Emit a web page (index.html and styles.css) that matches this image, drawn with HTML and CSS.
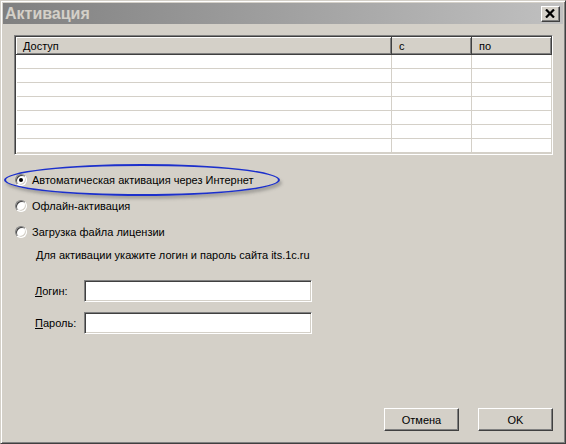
FILE: index.html
```html
<!DOCTYPE html>
<html lang="ru">
<head>
    <meta charset="UTF-8">
    <title>Активация</title>
    <link rel="stylesheet" href="styles.css">
</head>
<body>
    <div class="window">
        <div class="title-bar">
            <span class="title">Активация</span>
            <div class="close-btn">
                <svg width="10" height="9" viewBox="0 0 10 9">
                    <path d="M1 0.5 L9 8.5 M9 0.5 L1 8.5" stroke="#000" stroke-width="2.2"/>
                </svg>
            </div>
        </div>

        <div class="dialog-body">
            <div class="grid">
                <table>
                    <thead>
                        <tr>
                            <th class="col-access">Доступ</th>
                            <th class="col-from">с</th>
                            <th class="col-to">по</th>
                        </tr>
                    </thead>
                    <tbody>
                        <tr><td></td><td></td><td></td></tr>
                        <tr><td></td><td></td><td></td></tr>
                        <tr><td></td><td></td><td></td></tr>
                        <tr><td></td><td></td><td></td></tr>
                        <tr><td></td><td></td><td></td></tr>
                        <tr><td></td><td></td><td></td></tr>
                        <tr><td></td><td></td><td></td></tr>
                    </tbody>
                </table>
            </div>

            <div class="options">
                <div class="highlight"></div>
                <div class="option"><span class="radio checked"></span>Автоматическая активация через Интернет</div>
                <div class="option"><span class="radio"></span>Офлайн-активация</div>
                <div class="option"><span class="radio"></span>Загрузка файла лицензии</div>
            </div>

            <div class="hint">Для активации укажите логин и пароль сайта its.1c.ru</div>

            <div class="field">
                <label><u>Л</u>огин:</label>
                <div class="text-box"></div>
            </div>
            <div class="field">
                <label><u>П</u>ароль:</label>
                <div class="text-box"></div>
            </div>

            <div class="buttons">
                <div class="button">Отмена</div>
                <div class="button">OK</div>
            </div>
        </div>
    </div>
</body>
</html>
```

FILE: styles.css
```css
body {
    margin: 0;
    font-family: "Liberation Sans", Arial, sans-serif;
    font-size: 11px;
    color: #000;
    background: #d4d0c8;
}

.window {
    width: 566px;
    height: 444px;
    box-sizing: border-box;
    background: #d4d0c8;
    border: 1px solid;
    border-color: #d4d0c8 #404040 #404040 #d4d0c8;
    box-shadow: inset 1px 1px #fff, inset -1px -1px #808080;
    padding: 2px;
    display: flex;
    flex-direction: column;
}

.title-bar {
    height: 21px;
    display: flex;
    align-items: center;
    justify-content: space-between;
    padding: 0 3px 0 2px;
    background: linear-gradient(to right, #808080, #c0c0c0);
}

.title {
    font-size: 16px;
    font-weight: bold;
    color: #d4d0c8;
    line-height: 21px;
}

.close-btn {
    width: 19px;
    height: 16px;
    box-sizing: border-box;
    background: #d4d0c8;
    border: 1px solid;
    border-color: #fff #404040 #404040 #fff;
    box-shadow: inset -1px -1px #808080;
    display: flex;
    align-items: center;
    justify-content: center;
    padding-right: 1px;
}

.dialog-body {
    flex: 1;
    display: flex;
    flex-direction: column;
    padding: 11px 10px 10px 11px;
}

.grid {
    width: 539px;
    box-sizing: border-box;
    border: 1px solid;
    border-color: #808080 #fff #fff #808080;
    box-shadow: inset 1px 1px #404040, inset -1px -1px #d4d0c8;
    padding: 1px;
    background: #fff;
}

table {
    border-collapse: collapse;
    table-layout: fixed;
    width: 535px;
}

th {
    height: 17px;
    box-sizing: border-box;
    padding: 0 0 0 6px;
    text-align: left;
    font-weight: normal;
    background: #d4d0c8;
    border: 1px solid;
    border-color: #fff #404040 #404040 #fff;
    box-shadow: inset -1px -1px #808080;
}

.col-access { width: 375px; }
.col-from { width: 80px; padding-left: 7px; }
.col-to { width: 80px; padding-left: 7px; }

td {
    height: 13px;
    padding: 0;
    border-bottom: 1px solid #d4d0c8;
    border-right: 1px solid #d4d0c8;
}

td:last-child {
    border-right: none;
}

.options {
    position: relative;
    margin: 18px 0 0 1px;
    display: flex;
    flex-direction: column;
    gap: 12px;
}

.option {
    display: flex;
    align-items: center;
    height: 14px;
    gap: 5px;
}

.radio {
    position: relative;
    width: 12px;
    height: 12px;
    box-sizing: border-box;
    border-radius: 50%;
    background: #fff;
    border: 1px solid;
    border-color: #808080 #fff #fff #808080;
    box-shadow: inset 1px 1px #404040, inset -1px -1px #d4d0c8;
}

.radio.checked::after {
    content: "";
    position: absolute;
    left: 3px;
    top: 3px;
    width: 4px;
    height: 4px;
    border-radius: 50%;
    background: #000;
}

.highlight {
    position: absolute;
    left: -11px;
    top: -9px;
    width: 272px;
    height: 28px;
    border: 2px solid #1c30cc;
    border-radius: 50%;
    box-shadow: 2px 3px 3px rgba(80, 80, 80, 0.35);
}

.hint {
    margin: 9px 0 0 22px;
    line-height: 14px;
}

.field {
    display: flex;
    align-items: center;
    margin: 18px 0 0 21px;
}

.field + .field {
    margin-top: 10px;
}

.field label {
    width: 49px;
}

.text-box {
    width: 228px;
    height: 22px;
    box-sizing: border-box;
    background: #fff;
    border: 1px solid;
    border-color: #808080 #fff #fff #808080;
    box-shadow: inset 1px 1px #404040, inset -1px -1px #d4d0c8;
}

.buttons {
    margin-top: auto;
    display: flex;
    justify-content: flex-end;
    gap: 19px;
}

.button {
    width: 75px;
    height: 23px;
    box-sizing: border-box;
    display: flex;
    align-items: center;
    justify-content: center;
    background: #d4d0c8;
    border: 1px solid;
    border-color: #fff #404040 #404040 #fff;
    box-shadow: inset -1px -1px #808080;
}
```
